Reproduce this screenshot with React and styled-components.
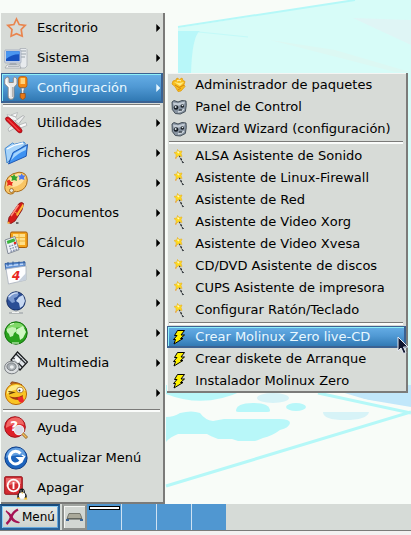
import React from "react";
import styled, { createGlobalStyle, css } from "styled-components";

const GlobalStyle = createGlobalStyle`
  * { box-sizing: border-box; }
  body {
    margin: 0;
    background: #f8fcf8;
    font-family: "DejaVu Sans", "Liberation Sans", sans-serif;
    font-size: 13px;
    color: #000;
  }
`;

const Desktop = styled.div`
  position: relative;
  min-height: 100vh;
  display: flex;
  flex-direction: column;
  overflow: hidden;
`;

const Wallpaper = styled.svg`
  position: absolute;
  inset: 0;
  width: 100%;
  height: 100%;
  z-index: -1;
`;

const Workspace = styled.main`
  flex: 1;
  display: flex;
  align-items: flex-end;
`;

const panel = css`
  margin: 0;
  padding: 0;
  list-style: none;
  width: max-content;
  background: #d7dbd7;
  border-right: 2px solid #7b7b79;
  box-shadow: inset 0 -2px #7b7b79;
`;

const MainMenu = styled.ul`
  ${panel}
  margin-left: 1px;
  padding-bottom: 1px;
`;

const SubMenu = styled.ul`
  ${panel}
  position: absolute;
  top: 0;
  left: calc(100% + 4px);
  padding-top: 1px;
  padding-bottom: 1px;
  box-shadow: inset 0 -2px #7b7b79, inset 1px 1px #f4f6f4;
`;

const Item = styled.li`
  position: relative;
`;

const Rule = styled.li`
  height: 5px;
  padding: 1px 3px 0 2px;
  &::before {
    content: "";
    display: block;
    height: 2px;
    background: #fafcfa;
    border-top: 1px solid #7b7b79;
  }
`;

const Entry = styled.button`
  display: flex;
  align-items: center;
  width: 100%;
  height: ${(p) => (p.$small ? 22 : 30)}px;
  margin: 0;
  padding: ${(p) => (p.$small ? "0 15px 0 4px" : "0 3px")};
  gap: ${(p) => (p.$small ? 8 : 9)}px;
  border: 0;
  background: none;
  font: inherit;
  line-height: 16px;
  text-align: left;
  white-space: nowrap;
  color: #000;
  svg { flex: none; }
  ${(p) =>
    p.$selected &&
    css`
      color: #e8f8ff;
      background: linear-gradient(#68b0e8, #5099d4 45%, #2c74ae);
      box-shadow: inset 0 0 0 1px #3b6292, inset 0 -2px #3b6292, inset -2px 0 #3b6292,
        inset 2px 2px #8ff0f8;
    `}
`;

const Label = styled.span`
  flex: 1;
`;

const Arrow = styled.span`
  width: 4px;
  height: 8px;
  margin-left: 6px;
  background: ${(p) => (p.$shown ? "currentColor" : "none")};
  clip-path: polygon(0 0, 100% 50%, 0 100%);
`;

const Cursor = styled.svg`
  position: absolute;
  right: -3px;
  top: 10px;
  pointer-events: none;
`;

const Taskbar = styled.footer`
  display: flex;
  height: 27px;
  margin-bottom: 4px;
  background: #d6dbd7;
  border-bottom: 1px solid #7b7b79;
  box-shadow: 0 4px #f3f1f1;
`;

const StartButton = styled.button`
  display: flex;
  align-items: center;
  gap: 1px;
  height: 26px;
  padding: 0 3px;
  font: inherit;
  font-size: 12px;
  line-height: 16px;
  color: #000;
  background: linear-gradient(#e6e9e6, #cdd2ce);
  border: 2px solid #28629a;
  border-top-color: #174a7c;
  box-shadow: inset 1px 1px #8ccdf5, inset -1px -1px #68a8dc;
`;

const TrayButton = styled.button`
  display: flex;
  align-items: center;
  justify-content: center;
  width: 25px;
  height: 26px;
  margin: 0 0 0 2px;
  padding: 0;
  background: #d3d7d3;
  border: 2px solid #8d908d;
  border-top-color: #a0a4a0;
  box-shadow: inset 1px 1px #f4f6f4;
`;

const Pager = styled.div`
  display: flex;
  gap: 1px;
  background: #cfe2f2;
`;

const Workplace = styled.button`
  width: 34px;
  height: 26px;
  padding: 2px 0 0 2px;
  display: flex;
  align-items: flex-start;
  border: 0;
  background: #5097d1;
`;

const MiniWindow = styled.span`
  width: 31px;
  height: 4px;
  border: 1px solid #000;
  background: #fff;
`;

/* ---------- menu icons, 24 x 24 ---------- */

const Big = ({ children }) => (
  <svg width="24" height="24" viewBox="0 0 24 24" aria-hidden="true">{children}</svg>
);

const Small = ({ children }) => (
  <svg width="16" height="16" viewBox="0 0 16 16" aria-hidden="true">{children}</svg>
);

const StarIcon = () => (
  <Big>
    <path d="M12.500 3l2.700 5.500 6 .8-4 4.200 1 6.700-5.700-2.400-5.400 2.400.9-6.700-4.200-4.200 6.100-.8z" fill="none" stroke="#e9854e" strokeWidth="1.700" />
  </Big>
);

const ComputerIcon = () => (
  <Big>
    <path d="M16 2.500h6l1 1V20l-2 2h-5z" fill="#e8ebee" stroke="#aab0b6" strokeWidth=".8" />
    <path d="M17 5h5M17 8h5M17 11h4" stroke="#98a2aa" />
    <rect x=".7" y="4" width="16.3" height="13" rx="1" fill="#d2dae6" stroke="#9eaabd" strokeWidth=".8" />
    <rect x="2" y="5.300" width="13.600" height="9.800" fill="#1652c0" />
    <path d="M2 5.300h13.600v3Q8 8 2 13z" fill="#4a96f0" />
    <path d="M6 17h6l1 2H5z" fill="#a4acb5" />
    <path d="M3 19h12l2 3H1z" fill="#f5f6f7" stroke="#9ea4aa" strokeWidth=".8" />
    <path d="M4 20.500h11" stroke="#b2b8bd" />
  </Big>
);

const ToolsIcon = () => (
  <Big>
    <path d="M3 .8L.8 3v5l3.400 3.500v9.700l1.500 2h2.800l1.500-2v-9.700L13 8V3L11 .8 9.300 2v4.500H5V2z" fill="#e9eaeb" stroke="#8a8480" strokeWidth=".9" />
    <path d="M2.200 3.500v4l3.300 3.300V20" fill="none" stroke="#fff" strokeWidth="1.200" />
    <path d="M8.500 11v10" stroke="#b4b3b2" strokeWidth="1.200" />
    <rect x="14.500" y=".6" width="8.500" height="11" rx="2.500" fill="#f58a14" stroke="#b85a0a" strokeWidth=".8" />
    <path d="M16.500 2h4.500v6h-4.500z" fill="#ffd27a" />
    <path d="M17 12h3.500l-.8 3v3h-2v-3z" fill="#f4f6f8" stroke="#68747e" strokeWidth=".7" />
    <path d="M16.200 17.500h5v4.200l-2.500 2-2.500-2z" fill="#e87916" stroke="#9a4a10" strokeWidth=".7" />
  </Big>
);

const KnifeIcon = () => (
  <Big>
    <path d="M5 7.500L3 3.500l8 2 5 6z" fill="#f3f4f4" stroke="#b0b4b6" strokeWidth=".7" />
    <path d="M7 4L13.500 1.500 12 6z" fill="#fafafa" stroke="#a9adaf" strokeWidth=".7" />
    <path d="M11 10l8-5.500 1.500 1-6 7.500z" fill="#eceeee" stroke="#9da1a3" strokeWidth=".7" />
    <path d="M15 14l7-2.500.8 3-6.500 2.500z" fill="#f8f8f8" stroke="#a5a9ab" strokeWidth=".7" />
    <path d="M8 14l-4 4 1 2.500 6-3.500" fill="#f0f0f0" stroke="#a4a7a9" strokeWidth=".7" />
    <path d="M2 9.500Q.5 7 2.800 6q1.500-.4 3 1L17 17.500q2 2.500.4 4-1.600 1-3.600-.6z" fill="#d9111b" stroke="#8e0b12" strokeWidth=".7" />
    <path d="M3.500 8l12 12" stroke="#ff6a62" strokeWidth="1" />
  </Big>
);

const FolderIcon = () => (
  <Big>
    <path d="M1 7.500L8.500 2l2 1.200L20 1l1.500 2-9 9L3 22z" fill="#a7d4fa" stroke="#367fcb" strokeWidth=".9" />
    <path d="M3 8l8-4 8-2" stroke="#fff" strokeWidth="1.300" fill="none" />
    <path d="M4.500 23L9 11.500l14.500-8-1.300 11.700z" fill="#3e92f1" stroke="#154fae" strokeWidth=".9" />
    <path d="M9.800 12.500L22.300 5.300 21.800 9Q13 12.500 7 19.500z" fill="#a5d5fd" />
  </Big>
);

const PaletteIcon = () => (
  <Big>
    <path d="M15 1.200q8 0 8.300 8-.3 9-9 11.300-2 .5-3.500-.4-1 3.400-4.500 3Q1 22 .8 16.500 1 3 15 1.200z" fill="#f8c565" stroke="#a96b18" />
    <path d="M14 2.500Q4 5 2.500 14l7 2q8-1 11.500-9-2-4.500-7-4.500z" fill="#ffe3a1" />
    <circle cx="7.500" cy="19.500" r="2" fill="#e3e6e0" stroke="#986018" strokeWidth=".8" />
    <path d="M5.500 8.500L7 11h2l-1 2 .5 2-3-1-2.500 1 .5-3-1-2z" fill="#e72c1c" />
    <path d="M10 3l1.500 2.500H14l-1.500 2L13 10l-3-1-2.500 1L8 7 6.500 5H9z" fill="#34a52d" />
    <path d="M17.500 2.500L19 4.500h2.500L20 6.500l.5 2.500-3-1-2.500 1 .5-2.500-1.500-2h2.500z" fill="#4c78ee" />
  </Big>
);

const PenIcon = () => (
  <Big>
    <path d="M15 2.500Q18 .5 19.500 2.500L18 9l-7 11-4 2.500-3-1 1-5z" fill="#d31c1a" stroke="#7c0c0e" strokeWidth=".8" />
    <path d="M14.500 4L7 15" stroke="#ff8b7a" strokeWidth="1.600" />
    <path d="M19 2.500l.5 3-6 9.500-1.500-1z" fill="#ffbf39" />
    <path d="M11 11l3.500 2.500" stroke="#f0b13c" strokeWidth="1" />
    <path d="M4 20.500L3.500 23l3-1" fill="#ffb234" />
    <path d="M12 22h2.500" stroke="#000" />
  </Big>
);

const CalcIcon = () => (
  <Big>
    <rect x="6.500" y="1" width="16.800" height="15.500" rx="1.500" fill="#f5a41a" stroke="#a65c0a" />
    <rect x="9" y="3" width="12" height="11" fill="#ffe08a" />
    <path d="M9 6.500h12M9 10h12M15 3v11" stroke="#eeb540" />
    <path d="M1 9l10-3.500 4 13.200-11 4z" fill="#eef1f6" stroke="#79818f" strokeWidth=".9" />
    <path d="M2.700 10l7.600-2.700 1 3-7.700 2.800z" fill="#38b43c" />
    <path d="M5 15.500l8-2.800M5.800 18l8-2.800M6.500 20.500l7-2.500" stroke="#8591ae" strokeWidth="1.400" strokeDasharray="1.700 1" />
    <circle cx="11" cy="12" r="1.300" fill="#e32b20" />
  </Big>
);

const CalendarIcon = () => (
  <Big>
    <path d="M1 2.500L21 1v6L2 9z" fill="#5c8fd6" stroke="#24559e" strokeWidth=".8" />
    <path d="M2 5l19-2" stroke="#bed8fa" strokeWidth="1.300" />
    <path d="M4 1v4M9 .5v4M15 .5v4M20 0v4" stroke="#315b97" />
    <path d="M2 8l20-3v14L4.500 23z" fill="#fdfdfe" stroke="#a8b1bd" strokeWidth=".8" />
    <path d="M14 20.800L22 12v7z" fill="#c7d0dc" />
    <text x="8" y="19" fontSize="12" fontWeight="bold" fontStyle="italic" fill="#e82420">4</text>
  </Big>
);

const NetworkIcon = () => (
  <Big>
    <circle cx="12" cy="10" r="9.200" fill="#2b4e95" stroke="#152d62" />
    <path d="M4 5q3-4 8-3.500L15 3l-2 3-3 1 1 4-3 1-4-4z" fill="#7d9bd0" />
    <path d="M15 6l4-2 2 6-2 5-3 2-1-5-3-2z" fill="#c8d9f2" />
    <path d="M5 6q4-4.500 9-4" stroke="#dae6f8" strokeWidth="1.200" fill="none" />
    <path d="M12 19v3M5 22h14" stroke="#a9aeb1" strokeWidth="1.300" />
    <path d="M8 21.500h7" stroke="#f2f3f3" />
  </Big>
);

const InternetIcon = () => (
  <Big>
    <circle cx="12" cy="12" r="11.200" fill="#29a21d" stroke="#14710f" />
    <path d="M2 10q1-7 9-8.300 7-.7 10 5.300-9-2-19 3z" fill="#7fd968" />
    <path d="M3 8l5-2 4 1 1 3-3 2-1 3-3 1-1-3-2-2z" fill="#c4f2b5" />
    <path d="M13 8l6-3 3 6-3 6-3 2-1-5-3-2z" fill="#d0f8c4" />
    <path d="M6 3.500l4-1M8 22h7" stroke="#eaffdf" strokeWidth="1.200" />
  </Big>
);

const MediaIcon = () => (
  <Big>
    <path d="M7 9L13.500 1 23.500 11 16 19z" fill="#dfe4e8" stroke="#151719" strokeWidth="1.200" />
    <path d="M9.500 7l9 9.500M12 3l10 10" stroke="#25282b" strokeWidth="1.300" />
    <path d="M18 7.500L13 13" stroke="#33383b" strokeWidth="1.200" />
    <path d="M13 5.500l4 4-3 3-4-4z" fill="#f8fafb" />
    <ellipse cx="7.800" cy="16.500" rx="7.200" ry="6.300" fill="#dcdfe1" stroke="#7a7f83" />
    <ellipse cx="7.500" cy="15.700" rx="4.600" ry="3.800" fill="#a9afb3" stroke="#777c80" />
    <ellipse cx="7.800" cy="16" rx="2" ry="1.700" fill="#eceeef" />
  </Big>
);

const SmileyIcon = () => (
  <Big>
    <path d="M8 4Q5 2 8 .8l6 1.200 4 2z" fill="#c76b20" stroke="#7f3a0e" strokeWidth=".8" />
    <circle cx="12" cy="13" r="10.600" fill="#f9c424" stroke="#bb6b0c" />
    <path d="M3 10q3-7 11-6 6 1 7.500 6Q12 6 3 13z" fill="#ffec86" />
    <path d="M4.500 10.500l5 1-4.500 1.500" fill="none" stroke="#60370b" strokeWidth="1.200" />
    <ellipse cx="16" cy="9" rx="3.300" ry="2.800" fill="#fff" stroke="#936019" strokeWidth=".7" />
    <circle cx="15.500" cy="9.500" r="1" fill="#231507" />
    <path d="M5 15q7 3 14-1-.5 4.500-4 5-7 0-10-4z" fill="#a33a10" />
    <path d="M13.500 16.500l5-1 1.500 4q-.5 2.500-3 2.300-2.500-.5-3.500-5.300z" fill="#ee282d" />
  </Big>
);

const HelpIcon = () => (
  <Big>
    <circle cx="11" cy="11" r="10.300" fill="#de2028" stroke="#9e1219" />
    <path d="M2 10Q3 2 11 1.500T20 9Q12 6 2 12z" fill="#f06865" />
    <text x="6" y="15" fontSize="14" fontWeight="bold" fill="#fff">?</text>
    <circle cx="15" cy="14" r="4.600" fill="#dbeefb" fillOpacity=".9" stroke="#e8eef1" strokeWidth="1.400" />
    <path d="M18.500 17.500l4.500 4.500" stroke="#99682a" strokeWidth="3" />
    <path d="M18.500 17.500l4 4" stroke="#f4c05d" strokeWidth="1.400" />
  </Big>
);

const UpdateIcon = () => (
  <Big>
    <circle cx="12" cy="12" r="11.100" fill="#1d64bd" stroke="#123f86" />
    <path d="M2 11Q3 2 12 1.700T22 11Q12 7 2 12z" fill="#639fe1" />
    <path d="M16.500 7.500A6.300 6.300 0 1 0 17.800 13.500" fill="none" stroke="#fff" strokeWidth="3" />
    <path d="M11.500 11H21l-3 6z" fill="#fff" />
    <path d="M18 9l3 2" stroke="#fff" strokeWidth="1.500" />
  </Big>
);

const ShutdownIcon = () => (
  <Big>
    <rect x=".7" y=".7" width="17.600" height="17.600" rx="1" fill="#d32c32" stroke="#97161c" />
    <path d="M2 2h15v6Q9 6 2 11z" fill="#e86a6b" />
    <circle cx="9.500" cy="9.500" r="5.800" fill="none" stroke="#fff" strokeWidth="1.700" />
    <path d="M9.500 6v7" stroke="#fff" strokeWidth="1.900" />
    <path d="M18 12.500q3 0 3 4.500 2.500 2 1.500 5H13.500q-1-3 1.500-5 0-4.500 3-4.500z" fill="#17191b" />
    <ellipse cx="18" cy="19.500" rx="3.200" ry="3.300" fill="#fff" />
    <path d="M16.500 15h1M19 15h1" stroke="#fff" strokeWidth="1.200" />
    <path d="M17 16.500h2.500l-1.200 1.300zM12.500 23l2-2 2 2.500zM19.500 23.500l2.500-2.500 1.500 2.500z" fill="#f4b81d" />
  </Big>
);

/* ---------- submenu icons, 16 x 16 ---------- */

const PackageIcon = () => (
  <Small>
    <path d="M2 4l3-1 1-2 2.500 1.500L11 1l1 2.500 2 1-1 3 1 2-4 4.500-3 .5-3-5L1 7z" fill="#f7bd1c" stroke="#e09a10" strokeWidth=".8" />
    <path d="M3 5l5 1 5-1-4 4z" fill="#ffed80" />
    <path d="M4 8l4 2.500L13 8M7 13l3-2" stroke="#d78510" fill="none" />
    <path d="M6 4l2-1 2 1" stroke="#fff7c9" fill="none" />
  </Small>
);

const ControlIcon = () => (
  <Small>
    <path d="M1 3l2-1.500 4 1.500 4-1.500 4 .5.300 4.500-1 6-5 2.500-5-.5-3-4z" fill="#8793a0" stroke="#3b4650" strokeWidth=".9" />
    <path d="M2 3.500l5 .7L14 2.500l-1 3-5 1-5 1z" fill="#c3ccd5" />
    <circle cx="5" cy="8.500" r="2.300" fill="#161d24" />
    <circle cx="4.600" cy="8" r="1" fill="#dce4e9" />
    <circle cx="11.300" cy="7" r="1.800" fill="#1a2127" />
    <circle cx="11.500" cy="6.500" r=".8" fill="#e4eaee" />
    <path d="M7 13l4-1 2-2" stroke="#cfd7dd" strokeWidth="1.300" fill="none" />
    <path d="M8 11h3" stroke="#1c242b" />
  </Small>
);

const WandIcon = () => (
  <Small>
    <path d="M8 7l4 8" stroke="#20252a" strokeWidth="1.200" strokeDasharray="2.500 1" />
    <path d="M11 14.500h2" stroke="#4a4f53" />
    <path d="M6.500 1.500l1.500 2 3-.5-1 2.500 1 3-3-1-3 2 .2-3-2.200-2 3-.5z" fill="#ffdc1c" stroke="#eab52a" strokeWidth=".7" />
    <path d="M6.500 3.500L8 5" stroke="#fff9bd" strokeWidth="1.500" />
    <path d="M4 10h1.500" stroke="#f28b10" />
  </Small>
);

const BoltIcon = () => (
  <Small>
    <path d="M6.500 1.500h7L10 6h3.500L9.500 9.500H12L3 15l1.500-4.500H2.500L6 6.500H3.500z" fill="#fff200" stroke="#000" strokeWidth="1" />
  </Small>
);

const LogoIcon = () => (
  <svg width="16" height="18" viewBox="0 0 16 18" aria-hidden="true">
    <path d="M1 3q4 2 6 6 2 4 7.500 5.500-5.500.5-8.500-4Q4 5.500 1 3z" fill="#a51354" stroke="#a51354" strokeWidth="1.200" />
    <path d="M13 1.500Q8 4 6.500 8.500T1.500 16" fill="none" stroke="#a51354" strokeWidth="2.400" />
  </svg>
);

const DrawerIcon = () => (
  <svg width="17" height="10" viewBox="0 0 17 10" aria-hidden="true">
    <path d="M3 1.500h11l2 5H1z" fill="#aaa99a" stroke="#77786e" />
    <path d="M1 7h15" stroke="#4d504c" />
    <path d="M0 8h3M14 8h3" stroke="#3a6395" strokeWidth="2" />
  </svg>
);

const WallpaperArt = () => (
  <Wallpaper viewBox="0 0 411 535" preserveAspectRatio="xMinYMin slice" aria-hidden="true">
    <path d="M178 28L355 0h56v405L316 393 178 380z" fill="#d7fcf8" />
    <path d="M178 27L355 0" stroke="#b5f8f8" strokeWidth="2" />
    <path d="M178 31h22q-8 5-9 43h-13z" fill="#b8f7f9" />
    <path d="M199 32l49 5" stroke="#c3faf8" strokeWidth="1" />
    <path d="M353 18l58 2v25z" fill="#dff5f5" />
    <path d="M270 40l65 10 75 22h-15z" fill="#dcf8f3" />
    <path d="M166 385h245v22L322 392z" fill="#c1e7fa" />
    <path d="M166 385h152l93 28v94H166z" fill="#f8fcf8" />
    <path d="M166 394q38 15 76-3v-6h-76z" fill="#b8f7f9" />
    <path d="M318 393l93 20M166 486l245-74" stroke="#b5f8f8" strokeWidth="3" fill="none" />
    <path d="M166 417q8 0 14-4 12-3 20 0 5 7 13 8l11-2h55q11 0 11 4-1 5-10 7-8 6-17 8-7 3-8 3h-17l-6-2h-14q-8-3-11-5h-29q-8 3-12 8z" fill="#b8f7f9" />
    <path d="M236 411q0-8 17-8t17 8q0 1-3 1h-28q-3 0-3-1z" fill="#b8f7f9" />
    <ellipse cx="296" cy="407" rx="10" ry="4" fill="#b8f7f9" />
    <ellipse cx="273" cy="398" rx="16" ry="5" fill="#d7f3f7" />
    <path d="M323 412h46q-2 8-24 8t-22-8z" fill="#d7f3f7" />
  </Wallpaper>
);

const mainItems = [
  { label: "Escritorio", icon: StarIcon, sub: true },
  { label: "Sistema", icon: ComputerIcon, sub: true },
  { label: "Configuración", icon: ToolsIcon, sub: true, open: true },
  null,
  { label: "Utilidades", icon: KnifeIcon, sub: true },
  { label: "Ficheros", icon: FolderIcon, sub: true },
  { label: "Gráficos", icon: PaletteIcon, sub: true },
  { label: "Documentos", icon: PenIcon, sub: true },
  { label: "Cálculo", icon: CalcIcon, sub: true },
  { label: "Personal", icon: CalendarIcon, sub: true },
  { label: "Red", icon: NetworkIcon, sub: true },
  { label: "Internet", icon: InternetIcon, sub: true },
  { label: "Multimedia", icon: MediaIcon, sub: true },
  { label: "Juegos", icon: SmileyIcon, sub: true },
  null,
  { label: "Ayuda", icon: HelpIcon },
  { label: "Actualizar Menú", icon: UpdateIcon },
  { label: "Apagar", icon: ShutdownIcon },
];

const configItems = [
  { label: "Administrador de paquetes", icon: PackageIcon },
  { label: "Panel de Control", icon: ControlIcon },
  { label: "Wizard Wizard (configuración)", icon: ControlIcon },
  null,
  { label: "ALSA Asistente de Sonido", icon: WandIcon },
  { label: "Asistente de Linux-Firewall", icon: WandIcon },
  { label: "Asistente de Red", icon: WandIcon },
  { label: "Asistente de Video Xorg", icon: WandIcon },
  { label: "Asistente de Video Xvesa", icon: WandIcon },
  { label: "CD/DVD Asistente de discos", icon: WandIcon },
  { label: "CUPS Asistente de impresora", icon: WandIcon },
  { label: "Configurar Ratón/Teclado", icon: WandIcon },
  null,
  { label: "Crear Molinux Zero live-CD", icon: BoltIcon, selected: true },
  { label: "Crear diskete de Arranque", icon: BoltIcon },
  { label: "Instalador Molinux Zero", icon: BoltIcon },
];

const ConfigMenu = () => (
  <SubMenu>
    {configItems.map((item, i) =>
      item ? (
        <Item key={item.label}>
          <Entry $small $selected={item.selected}>
            <item.icon />
            <Label>{item.label}</Label>
          </Entry>
          {item.selected && (
            <Cursor width="12" height="19" viewBox="0 0 12 19" aria-hidden="true">
              <path d="M1 1v14l3-3 2.500 5.500 2.500-1L6.500 11H11z" fill="#10162f" stroke="#e6eaf2" />
            </Cursor>
          )}
        </Item>
      ) : (
        <Rule key={i} role="separator" />
      )
    )}
  </SubMenu>
);

export default function App() {
  return (
    <Desktop>
      <GlobalStyle />
      <WallpaperArt />
      <Workspace>
        <MainMenu>
          {mainItems.map((item, i) =>
            item ? (
              <Item key={item.label}>
                <Entry $selected={item.open} aria-haspopup={item.sub ? "menu" : undefined} aria-expanded={item.sub ? !!item.open : undefined}>
                  <item.icon />
                  <Label>{item.label}</Label>
                  <Arrow $shown={item.sub} />
                </Entry>
                {item.open && <ConfigMenu />}
              </Item>
            ) : (
              <Rule key={i} role="separator" />
            )
          )}
        </MainMenu>
      </Workspace>
      <Taskbar>
        <StartButton>
          <LogoIcon />
          Menú
        </StartButton>
        <TrayButton aria-label="Bandeja">
          <DrawerIcon />
        </TrayButton>
        <Pager>
          <Workplace aria-label="Escritorio 1">
            <MiniWindow />
          </Workplace>
          <Workplace aria-label="Escritorio 2" />
          <Workplace aria-label="Escritorio 3" />
          <Workplace aria-label="Escritorio 4" />
        </Pager>
      </Taskbar>
    </Desktop>
  );
}
